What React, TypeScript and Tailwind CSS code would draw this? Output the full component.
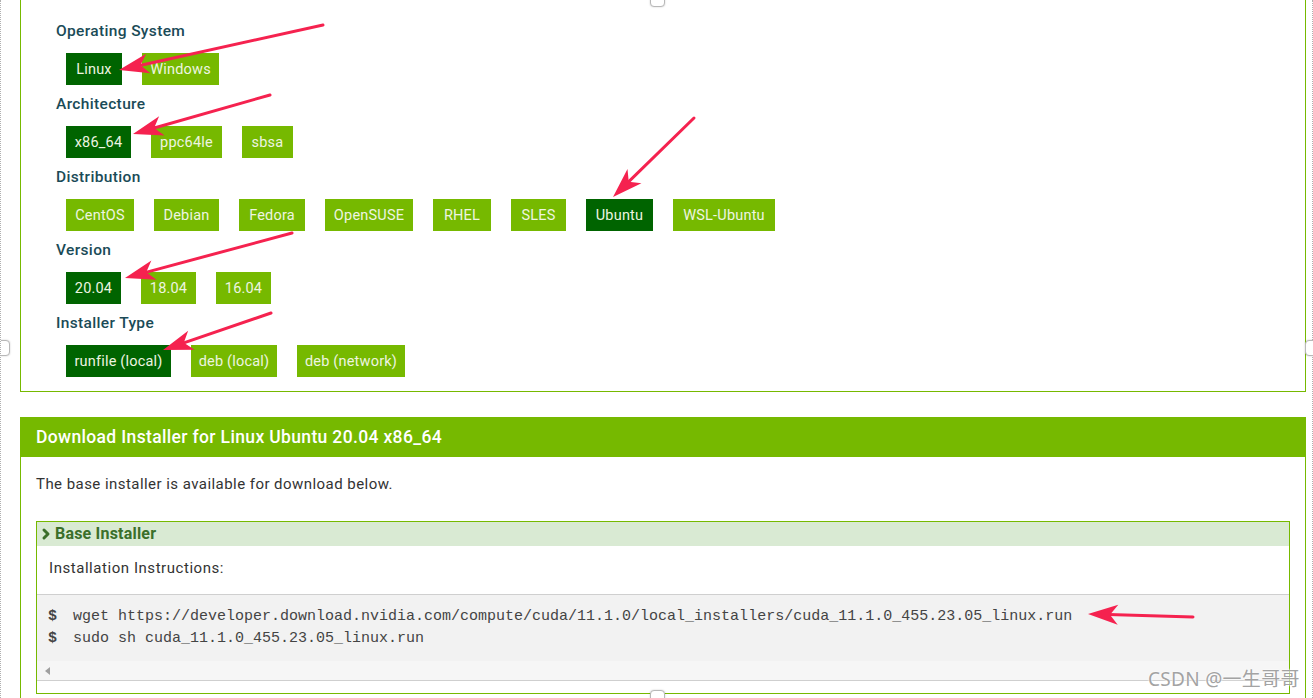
import { ChevronRight } from 'lucide-react'

interface IOptionRow {
  label: string
  options: { name: string; width: number; active?: boolean }[]
}

const rows: IOptionRow[] = [
  {
    label: 'Operating System',
    options: [
      { name: 'Linux', width: 56, active: true },
      { name: 'Windows', width: 77 },
    ],
  },
  {
    label: 'Architecture',
    options: [
      { name: 'x86_64', width: 65, active: true },
      { name: 'ppc64le', width: 71 },
      { name: 'sbsa', width: 51 },
    ],
  },
  {
    label: 'Distribution',
    options: [
      { name: 'CentOS', width: 68 },
      { name: 'Debian', width: 65 },
      { name: 'Fedora', width: 66 },
      { name: 'OpenSUSE', width: 88 },
      { name: 'RHEL', width: 58 },
      { name: 'SLES', width: 55 },
      { name: 'Ubuntu', width: 67, active: true },
      { name: 'WSL-Ubuntu', width: 102 },
    ],
  },
  {
    label: 'Version',
    options: [
      { name: '20.04', width: 55, active: true },
      { name: '18.04', width: 55 },
      { name: '16.04', width: 55 },
    ],
  },
  {
    label: 'Installer Type',
    options: [
      { name: 'runfile (local)', width: 105, active: true },
      { name: 'deb (local)', width: 86 },
      { name: 'deb (network)', width: 108 },
    ],
  },
]

const arrows = [
  [322, 25, 118, 70],
  [269, 95, 132, 134],
  [693, 118, 612, 197],
  [291, 233, 124, 278],
  [270, 313, 162, 350],
  [1192, 617, 1087, 614],
]

function Arrow({ x1, y1, x2, y2 }: { x1: number; y1: number; x2: number; y2: number }) {
  const dx = x2 - x1
  const dy = y2 - y1
  const len = Math.hypot(dx, dy)
  const ux = dx / len
  const uy = dy / len
  const headLen = 30
  const half = 10
  const bx = x2 - ux * headLen
  const by = y2 - uy * headLen
  const points = [
    `${x2},${y2}`,
    `${bx - uy * half},${by + ux * half}`,
    `${x2 - ux * (headLen - 8)},${y2 - uy * (headLen - 8)}`,
    `${bx + uy * half},${by - ux * half}`,
  ].join(' ')
  return (
    <g>
      <line
        x1={x1}
        y1={y1}
        x2={x2 - ux * 12}
        y2={y2 - uy * 12}
        stroke="#f5224f"
        strokeWidth={3}
        strokeLinecap="round"
      />
      <polygon points={points} fill="#f5224f" />
    </g>
  )
}

function Handle({ className }: { className: string }) {
  return (
    <div
      className={`absolute w-[15px] h-[16px] rounded-[4px] border border-[#b8b8b8] bg-white shadow-[0_0_2px_rgba(0,0,0,0.2)] ${className}`}
    />
  )
}

export default function App() {
  return (
    <div className="relative w-full h-[698px] overflow-hidden bg-white font-['Roboto','Noto_Sans',sans-serif] border-l border-dotted border-[#b0b0b0]">
      <div className="pl-[19px] pr-[7px]">
        <section className="border-x border-b border-[#76b900] pt-[20px] pb-[14px] pl-[35px]">
          {rows.map((row) => (
            <div key={row.label} className="mb-[8px] last:mb-0">
              <h3 className="h-[22px] leading-[22px] text-[15.5px] font-medium tracking-[0.35px] text-[#1a4b57]">
                {row.label}
              </h3>
              <ul className="flex gap-[20px] mt-[11px] pl-[10px]">
                {row.options.map((opt) => (
                  <li
                    key={opt.name}
                    style={{ width: opt.width }}
                    className={`h-[32px] pt-[2px] flex items-center justify-center text-[14.5px] tracking-[0.2px] text-[#eef5e0] ${
                      opt.active ? 'bg-[#006400]' : 'bg-[#76b900]'
                    }`}
                  >
                    {opt.name}
                  </li>
                ))}
              </ul>
            </div>
          ))}
        </section>

        <section className="mt-[25px] border-x border-[#76b900] h-[400px]">
          <h2 className="h-[40px] bg-[#76b900] flex items-center pl-[15px] text-[17.5px] font-medium text-white tracking-[0.35px]">
            Download Installer for Linux Ubuntu 20.04 x86_64
          </h2>
          <div className="px-[15px]">
            <p className="h-[22px] leading-[22px] mt-[16px] text-[15px] tracking-[0.45px] text-[#333]">
              The base installer is available for download below.
            </p>
            <div className="mt-[26px] border border-[#76b900]">
              <div className="h-[24px] bg-[#d9ead3] flex items-center pl-[1px] text-[16px] font-bold tracking-[0.2px] text-[#3b6f2a]">
                <ChevronRight size={16} strokeWidth={4.5} className="mr-[1px]" />
                Base Installer
              </div>
              <p className="h-[22px] leading-[22px] mt-[11px] pl-[12px] text-[15px] tracking-[0.55px] text-[#333]">
                Installation Instructions:
              </p>
              <div className="mt-[15px] border-y border-[#cfcfcf] bg-[#f2f2f2] font-['Liberation_Mono',monospace] text-[15px] text-[#444]">
                <div className="pt-[11px] pl-[11px] pb-[11px]">
                  <div className="h-[22px] leading-[22px] whitespace-pre">
                    <span className="font-bold">$</span>
                    <span className="ml-[16px]">
                      wget https://developer.download.nvidia.com/compute/cuda/11.1.0/local_installers/cuda_11.1.0_455.23.05_linux.run
                    </span>
                  </div>
                  <div className="h-[22px] leading-[22px] whitespace-pre">
                    <span className="font-bold">$</span>
                    <span className="ml-[16px]">sudo sh cuda_11.1.0_455.23.05_linux.run</span>
                  </div>
                </div>
                <div className="h-[19px] bg-[#f6f6f6] flex items-center pl-[8px]">
                  <svg width="5" height="8" viewBox="0 0 5 8">
                    <polygon points="5,0 0,4 5,8" fill="#a0a0a0" />
                  </svg>
                </div>
              </div>
              <div className="h-[12px]" />
            </div>
          </div>
        </section>
      </div>

      <div className="absolute top-0 right-0 h-full border-r border-dotted border-[#b0b0b0]" />

      <svg className="absolute inset-0 pointer-events-none" width="1313" height="698">
        {arrows.map(([x1, y1, x2, y2], i) => (
          <Arrow key={i} x1={x1} y1={y1} x2={x2} y2={y2} />
        ))}
      </svg>

      <span className="absolute left-[1147px] top-[665px] text-[19px] tracking-[0.3px] text-[#a3a3a3] font-['Noto_Sans','Noto_Sans_CJK_SC',sans-serif] [text-shadow:0_0_2px_#fff,0_0_2px_#fff]">
        CSDN @一生哥哥
      </span>

      <Handle className="left-[649px] -top-[9px]" />
      <Handle className="-left-[6px] top-[340px]" />
      <Handle className="-right-[7px] top-[340px]" />
      <Handle className="left-[649px] top-[690px]" />
    </div>
  )
}
